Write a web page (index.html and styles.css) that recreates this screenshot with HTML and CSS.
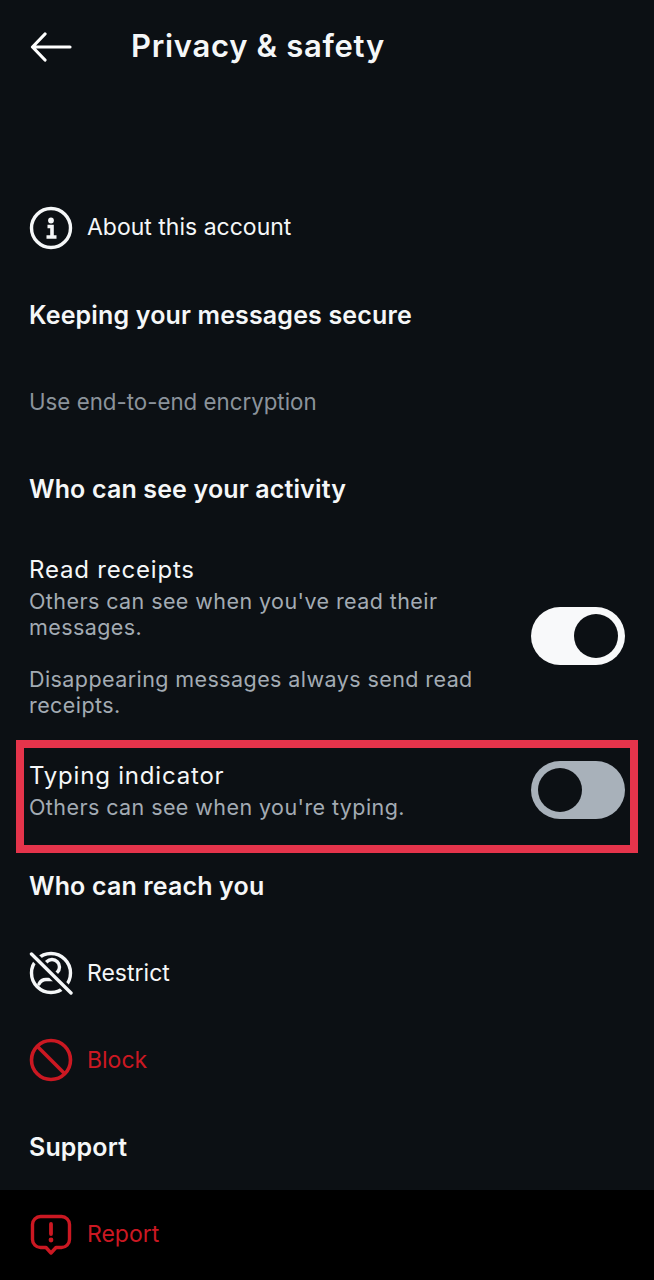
FILE: index.html
```html
<!DOCTYPE html>
<html lang="en">

<head>
    <meta charset="UTF-8">
    <meta name="viewport" content="width=device-width, initial-scale=1.0">
    <title>Privacy &amp; safety</title>
    <link rel="stylesheet" href="styles.css">
</head>

<body>
    <div class="page">
        <header class="top-bar">
            <svg class="back-icon" viewBox="0 0 42 30" width="42" height="30" fill="none" stroke="currentColor" stroke-width="3.2" stroke-linecap="round" stroke-linejoin="round">
                <path d="M40 15H2.500M15 2L2.500 15l12.500 13" />
            </svg>
            <h1 class="page-title">Privacy &amp; safety</h1>
        </header>

        <div class="row about-row">
            <svg class="icon" viewBox="0 0 44 44" width="44" height="44" fill="none" stroke="currentColor" stroke-width="3.4">
                <circle cx="22" cy="22" r="19.5" />
                <circle cx="22" cy="14.5" r="2.9" fill="currentColor" stroke="none" />
                <path d="M18.500 20.500h4.500v10M17.500 31h10" stroke-width="3.6" />
            </svg>
            <span>About this account</span>
        </div>

        <h2 class="section-title">Keeping your messages secure</h2>

        <div class="row muted">
            <span>Use end-to-end encryption</span>
        </div>

        <h2 class="section-title">Who can see your activity</h2>

        <div class="setting read-setting">
            <div class="setting-text">
                <div class="setting-name">Read receipts</div>
                <p class="setting-desc">Others can see when you've read their messages.</p>
                <p class="setting-desc">Disappearing messages always send read receipts.</p>
            </div>
            <div class="toggle on"><span class="knob"></span></div>
        </div>

        <div class="setting typing-setting">
            <div class="setting-text">
                <div class="setting-name">Typing indicator</div>
                <p class="setting-desc">Others can see when you're typing.</p>
            </div>
            <div class="toggle"><span class="knob"></span></div>
            <div class="highlight"></div>
        </div>

        <h2 class="section-title">Who can reach you</h2>

        <div class="row">
            <svg class="icon" viewBox="0 0 44 44" width="44" height="44" fill="none" stroke="currentColor" stroke-width="3.4" stroke-linecap="round">
                <circle cx="22" cy="22" r="19.500" />
                <circle cx="23" cy="16" r="7.500" />
                <path d="M10 33c1.500-3 4-4.500 7-4.500h7" />
                <path class="icon-gap" d="M2 2.500L42 42" />
                <path d="M2.500 3L42 42" />
            </svg>
            <span>Restrict</span>
        </div>

        <div class="row danger">
            <svg class="icon" viewBox="0 0 44 44" width="44" height="44" fill="none" stroke="currentColor" stroke-width="3.6">
                <circle cx="22" cy="22" r="19.500" />
                <path d="M8.500 8.500l27 27" />
            </svg>
            <span>Block</span>
        </div>

        <h2 class="section-title">Support</h2>

        <footer class="bottom-bar">
            <div class="row danger">
                <svg class="icon" viewBox="0 0 44 44" width="44" height="44" fill="none" stroke="currentColor" stroke-width="3.4" stroke-linejoin="round">
                    <path d="M11.500 4.500h21a8 8 0 0 1 8 8v15a8 8 0 0 1-8 8h-5.500l-5 5.500-5-5.500h-5.500a8 8 0 0 1-8-8v-15a8 8 0 0 1 8-8z" />
                    <path d="M22 12v10" stroke-linecap="round" stroke-width="3.800" />
                    <circle cx="22" cy="28" r="2.400" fill="currentColor" stroke="none" />
                </svg>
                <span>Report</span>
            </div>
        </footer>
    </div>
</body>

</html>
```

FILE: styles.css
```css
body {
    margin: 0;
    background-color: #0c1014;
    color: #f5f7f8;
    font-family: Inter, "Noto Sans", sans-serif;
}

.page {
    width: 654px;
    height: 1280px;
    overflow: hidden;
}

.top-bar {
    display: flex;
    align-items: center;
    height: 92px;
    margin-bottom: 92px;
    padding-left: 30px;
}

.back-icon {
    flex: none;
    margin-top: 2px;
    color: #fff;
}

.page-title {
    margin: 0 0 2px 59px;
    font-size: 31px;
    font-weight: 600;
    letter-spacing: 0.7px;
}

.row {
    display: flex;
    align-items: center;
    gap: 14px;
    height: 87px;
    padding-left: 29px;
    font-size: 23px;
}

.about-row span {
    margin-bottom: 2px;
}

.icon {
    flex: none;
}

.icon-gap {
    stroke: #0c1014;
    stroke-width: 9;
}

.muted {
    color: #8b939b;
    font-size: 22.3px;
}

.danger {
    color: #cb1822;
}

.section-title {
    display: flex;
    align-items: center;
    height: 87px;
    margin: 0;
    padding-left: 29px;
    font-size: 25px;
    font-weight: 600;
    letter-spacing: 0.15px;
}

.setting {
    display: flex;
    align-items: center;
    justify-content: space-between;
    gap: 40px;
    padding: 22px 29px;
}

.read-setting {
    padding-bottom: 20px;
}

.typing-setting {
    position: relative;
}

.setting-text {
    flex: 1;
}

.setting-name {
    font-size: 24px;
    line-height: 32px;
    letter-spacing: 0.8px;
}

.setting-desc {
    margin: 2px 0 0;
    color: #a3abb3;
    font-size: 21.5px;
    line-height: 26px;
    letter-spacing: 0.42px;
}

.setting-desc + .setting-desc {
    margin-top: 26px;
}

.toggle {
    display: flex;
    flex: none;
    align-items: center;
    width: 94px;
    height: 58px;
    padding: 0 7px;
    box-sizing: border-box;
    border-radius: 29px;
    background-color: #a8b1ba;
}

.toggle.on {
    justify-content: flex-end;
    background-color: #f8f9fa;
}

.knob {
    width: 44px;
    height: 44px;
    border-radius: 50%;
    background-color: #0c1014;
}

/* red annotation box drawn over the row */
.highlight {
    position: absolute;
    top: 2px;
    right: 16px;
    bottom: -11px;
    left: 16px;
    border: 8px solid #e5344b;
}

.bottom-bar {
    height: 90px;
    background-color: #000;
}
```
